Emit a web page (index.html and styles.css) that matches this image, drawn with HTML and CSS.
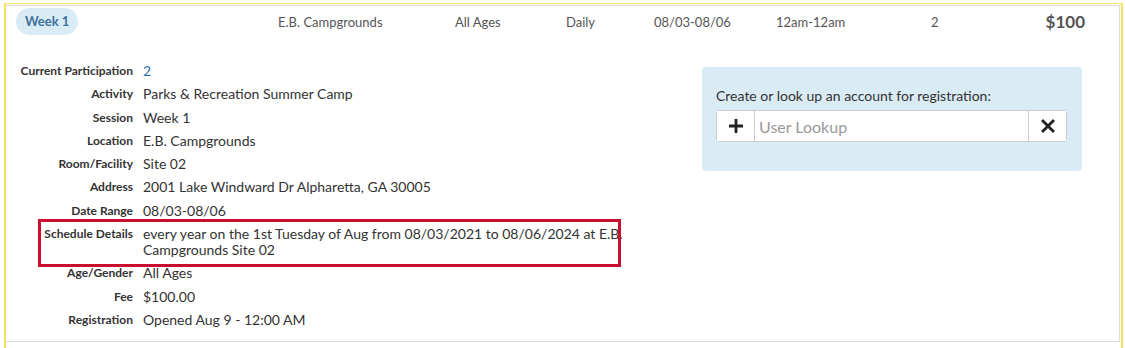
FILE: index.html
```html
<!DOCTYPE html>
<html lang="en">

<head>
    <meta charset="UTF-8">
    <meta name="viewport" content="width=device-width, initial-scale=1.0">
    <title>Week 1 - Session Details</title>
    <link rel="stylesheet" href="styles.css">
</head>

<body>
    <div class="frame">
        <div class="card">
            <div class="session-row">
                <div><span class="pill">Week 1</span></div>
                <div>E.B. Campgrounds</div>
                <div>All Ages</div>
                <div>Daily</div>
                <div>08/03-08/06</div>
                <div>12am-12am</div>
                <div>2</div>
                <div class="price">$100</div>
            </div>

            <div class="session-body">
                <div class="details">
                    <div class="row">
                        <span class="label">Current Participation</span>
                        <span class="value link">2</span>
                    </div>
                    <div class="row">
                        <span class="label">Activity</span>
                        <span class="value">Parks &amp; Recreation Summer Camp</span>
                    </div>
                    <div class="row">
                        <span class="label">Session</span>
                        <span class="value">Week 1</span>
                    </div>
                    <div class="row">
                        <span class="label">Location</span>
                        <span class="value">E.B. Campgrounds</span>
                    </div>
                    <div class="row">
                        <span class="label">Room/Facility</span>
                        <span class="value">Site 02</span>
                    </div>
                    <div class="row">
                        <span class="label">Address</span>
                        <span class="value">2001 Lake Windward Dr Alpharetta, GA 30005</span>
                    </div>
                    <div class="row">
                        <span class="label">Date Range</span>
                        <span class="value">08/03-08/06</span>
                    </div>
                    <div class="row highlight">
                        <span class="label">Schedule Details</span>
                        <span class="value">every year on the 1st Tuesday of Aug from 08/03/2021 to 08/06/2024 at E.B. Campgrounds Site 02</span>
                    </div>
                    <div class="row">
                        <span class="label">Age/Gender</span>
                        <span class="value">All Ages</span>
                    </div>
                    <div class="row">
                        <span class="label">Fee</span>
                        <span class="value">$100.00</span>
                    </div>
                    <div class="row">
                        <span class="label">Registration</span>
                        <span class="value">Opened Aug 9 - 12:00 AM</span>
                    </div>
                </div>

                <div class="account-panel">
                    <p>Create or look up an account for registration:</p>
                    <div class="lookup">
                        <button class="icon-btn" type="button" aria-label="Create account">
                            <svg width="14" height="14" viewBox="0 0 14 14">
                                <path d="M5.6 0h2.8v5.6H14v2.8H8.4V14H5.6V8.4H0V5.6h5.6z" fill="#222" />
                            </svg>
                        </button>
                        <input type="text" placeholder="User Lookup">
                        <button class="icon-btn clear" type="button" aria-label="Clear">
                            <svg width="14" height="14" viewBox="0 0 14 14">
                                <path d="M2 0l5 5 5-5 2 2-5 5 5 5-2 2-5-5-5 5-2-2 5-5-5-5z" fill="#222" />
                            </svg>
                        </button>
                    </div>
                </div>
            </div>
        </div>
    </div>
</body>

</html>
```

FILE: styles.css
```css
body {
    margin: 0;
    font-family: Lato, "Open Sans", Arial, sans-serif;
    color: #333;
    background: #fff;
}

.frame {
    margin: 3px 2px 0 4px;
    height: 345px;
    border-top: 1px solid #f4e45c;
    border-left: 2px solid #f4e45c;
    border-right: 2px solid #f4e45c;
    box-sizing: border-box;
}

.card {
    margin: 1px 1px 0 0;
    border-top: 1px solid #dcdcdc;
    border-right: 1px solid #dcdcdc;
    border-bottom: 1px solid #dcdcdc;
}

.session-row {
    display: grid;
    grid-template-columns: 262px 177px 111px 88px 122px 155px 1fr auto;
    align-items: center;
    padding: 2px 34px 0 10px;
    font-size: 13px;
    color: #555;
}

.pill {
    display: inline-block;
    height: 27px;
    line-height: 27px;
    padding: 0 9px;
    border-radius: 14px;
    background: #d9ebf5;
    color: #3d6f9b;
    font-weight: bold;
}

.price {
    font-size: 17px;
    font-weight: bold;
    color: #555;
}

.session-body {
    display: flex;
    align-items: flex-start;
    padding: 28px 37px 13px 10px;
}

.details {
    display: flex;
    flex-direction: column;
    gap: 7.3px;
    width: 620px;
}

.row {
    display: grid;
    grid-template-columns: 117px 480px;
    column-gap: 10px;
    line-height: 16px;
}

.label {
    text-align: right;
    font-size: 12px;
    font-weight: bold;
    color: #333;
}

.value {
    font-size: 14px;
    color: #333;
}

.value.link {
    color: #2a6fa8;
}

.highlight {
    position: relative;
}

.highlight::after {
    content: "";
    position: absolute;
    top: -7px;
    bottom: -9px;
    left: 22px;
    width: 583px;
    border: 3px solid #c8102e;
    box-sizing: border-box;
}

.account-panel {
    margin: 4px 0 0 auto;
    width: 380px;
    box-sizing: border-box;
    padding: 21px 15px 29px 14px;
    background: #d9ebf5;
    border-radius: 4px;
}

.account-panel p {
    margin: 0 0 6px;
    font-size: 14px;
    line-height: 16px;
    color: #333;
}

.lookup {
    display: flex;
    height: 32px;
    background: #fff;
    border: 1px solid #ccc;
    border-radius: 3px;
    box-sizing: border-box;
}

.icon-btn {
    width: 38px;
    padding: 0;
    border: none;
    border-right: 1px solid #ccc;
    background: #fff;
    display: flex;
    align-items: center;
    justify-content: center;
    cursor: pointer;
}

.icon-btn.clear {
    border-right: none;
    border-left: 1px solid #ccc;
}

.lookup input {
    flex: 1;
    min-width: 0;
    border: none;
    padding: 0 4px;
    font-family: inherit;
    font-size: 16px;
    color: #333;
    outline: none;
}

.lookup input::placeholder {
    color: #999;
}
```
